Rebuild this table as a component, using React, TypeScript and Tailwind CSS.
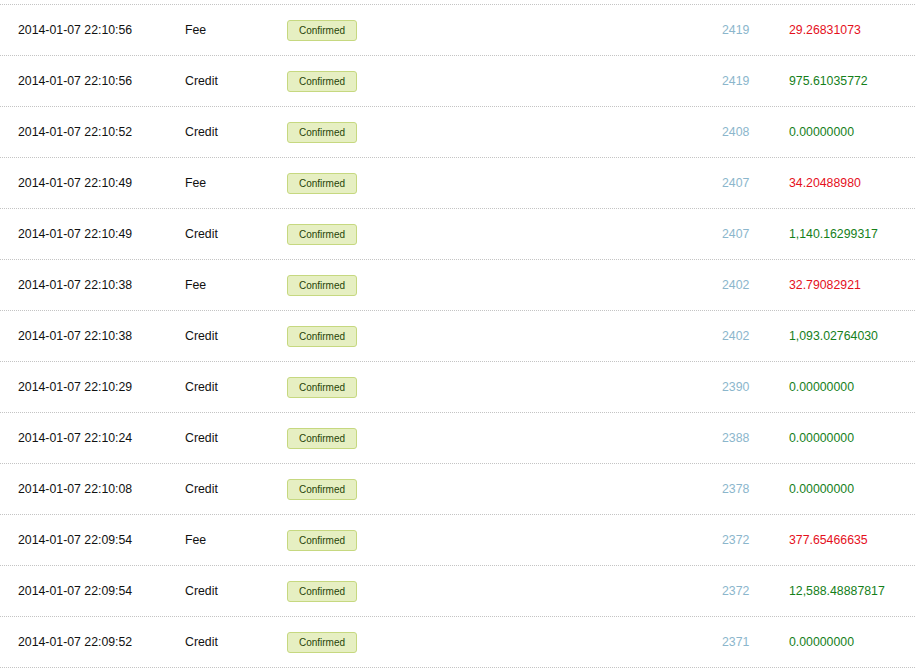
import React from "react";

type Row = { date: string; type: "Fee" | "Credit"; block: string; amount: string };

const rows: Row[] = [
  { date: "2014-01-07 22:10:56", type: "Fee", block: "2419", amount: "29.26831073" },
  { date: "2014-01-07 22:10:56", type: "Credit", block: "2419", amount: "975.61035772" },
  { date: "2014-01-07 22:10:52", type: "Credit", block: "2408", amount: "0.00000000" },
  { date: "2014-01-07 22:10:49", type: "Fee", block: "2407", amount: "34.20488980" },
  { date: "2014-01-07 22:10:49", type: "Credit", block: "2407", amount: "1,140.16299317" },
  { date: "2014-01-07 22:10:38", type: "Fee", block: "2402", amount: "32.79082921" },
  { date: "2014-01-07 22:10:38", type: "Credit", block: "2402", amount: "1,093.02764030" },
  { date: "2014-01-07 22:10:29", type: "Credit", block: "2390", amount: "0.00000000" },
  { date: "2014-01-07 22:10:24", type: "Credit", block: "2388", amount: "0.00000000" },
  { date: "2014-01-07 22:10:08", type: "Credit", block: "2378", amount: "0.00000000" },
  { date: "2014-01-07 22:09:54", type: "Fee", block: "2372", amount: "377.65466635" },
  { date: "2014-01-07 22:09:54", type: "Credit", block: "2372", amount: "12,588.48887817" },
  { date: "2014-01-07 22:09:52", type: "Credit", block: "2371", amount: "0.00000000" },
];

function Badge() {
  return (
    <span className="inline-flex h-[21px] w-[70px] items-center justify-center rounded-[3px] border border-[#c6d880] bg-[#e6efc2] text-[10px] text-[#264409]">
      Confirmed
    </span>
  );
}

export default function App() {
  return (
    <div className="min-h-[668px] w-[915px] bg-white font-['Liberation_Sans',Arial,sans-serif] text-[12.3px] text-[#111]">
      <div className="h-1" />
      <div className="border-b border-dotted border-[#c4c4c4]">
        {rows.map((r, i) => (
          <div
            key={i}
            className="grid h-[51px] grid-cols-[167px_102px_435px_67px_1fr] items-center border-t border-dotted border-[#c4c4c4] pl-[18px]"
          >
            <span>{r.date}</span>
            <span>{r.type}</span>
            <span>
              <Badge />
            </span>
            <span className="text-[#8bb6cc]">{r.block}</span>
            <span className={r.type === "Fee" ? "text-[#e5101c]" : "text-[#15801a]"}>{r.amount}</span>
          </div>
        ))}
      </div>
    </div>
  );
}
